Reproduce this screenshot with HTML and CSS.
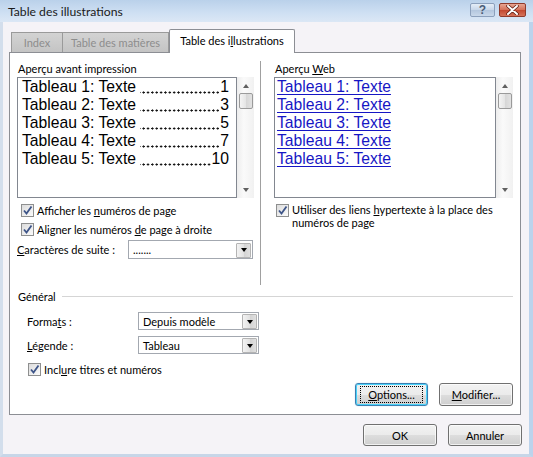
FILE: index.html
```html
<!DOCTYPE html>
<html lang="fr">
<head>
  <meta charset="UTF-8">
  <title>Table des illustrations</title>
  <link rel="stylesheet" href="styles.css">
</head>
<body>
  <div class="window">
    <div class="titlebar">
      <span class="title">Table des illustrations</span>
      <div class="caption-btns">
        <span class="cap-btn help">?</span>
        <span class="cap-btn close">
          <svg width="13" height="10" viewBox="0 0 13 10"><path d="M2 1 L11 9 M11 1 L2 9" stroke="#5a1a10" stroke-width="3.4" stroke-linecap="round"/><path d="M2 1 L11 9 M11 1 L2 9" stroke="#fff" stroke-width="2" stroke-linecap="round"/></svg>
        </span>
      </div>
    </div>

    <div class="frame">
      <div class="tabs">
        <div class="tab tab-index">Index</div>
        <div class="tab tab-toc">Table des matières</div>
        <div class="tab active"><span>Table des i<u>l</u>lustrations</span></div>
      </div>

      <div class="tabpage">
        <div class="previews">
          <!-- Print preview -->
          <div class="col col-left">
            <div class="label">Aperçu avant impression</div>
            <div class="preview-wrap">
              <div class="preview">
                <div class="entry"><span>Tableau 1: Texte&nbsp;</span><span class="dots"></span><span>1</span></div>
                <div class="entry"><span>Tableau 2: Texte&nbsp;</span><span class="dots"></span><span>3</span></div>
                <div class="entry"><span>Tableau 3: Texte&nbsp;</span><span class="dots"></span><span>5</span></div>
                <div class="entry"><span>Tableau 4: Texte&nbsp;</span><span class="dots"></span><span>7</span></div>
                <div class="entry"><span>Tableau 5: Texte&nbsp;</span><span class="dots"></span><span>10</span></div>
              </div>
              <div class="scrollbar">
                <span class="arrow up"></span>
                <span class="thumb"></span>
                <span class="arrow down"></span>
              </div>
            </div>
            <label class="check first"><span class="box"><svg width="11" height="11" viewBox="0 0 11 11"><path d="M2 5.5 L4.5 8.5 L9.5 1.5" fill="none" stroke="#3d5488" stroke-width="1.8"/></svg></span><span>Afficher les <u>n</u>uméros de page</span></label>
            <label class="check"><span class="box"><svg width="11" height="11" viewBox="0 0 11 11"><path d="M2 5.5 L4.5 8.5 L9.5 1.5" fill="none" stroke="#3d5488" stroke-width="1.8"/></svg></span><span>Aligner les numéros <u>d</u>e page à droite</span></label>
            <div class="field leader-field">
              <span class="field-label"><u>C</u>aractères de suite :</span>
              <div class="combo combo-leader"><span class="combo-text">.......</span><span class="combo-btn"></span></div>
            </div>
          </div>

          <div class="sep"></div>

          <!-- Web preview -->
          <div class="col col-right">
            <div class="label">Aperçu <u>W</u>eb</div>
            <div class="preview-wrap">
              <div class="preview web">
                <div class="entry"><a>Tableau 1: Texte</a></div>
                <div class="entry"><a>Tableau 2: Texte</a></div>
                <div class="entry"><a>Tableau 3: Texte</a></div>
                <div class="entry"><a>Tableau 4: Texte</a></div>
                <div class="entry"><a>Tableau 5: Texte</a></div>
              </div>
              <div class="scrollbar">
                <span class="arrow up"></span>
                <span class="thumb"></span>
                <span class="arrow down"></span>
              </div>
            </div>
            <label class="check first wrap"><span class="box"><svg width="11" height="11" viewBox="0 0 11 11"><path d="M2 5.5 L4.5 8.5 L9.5 1.5" fill="none" stroke="#3d5488" stroke-width="1.8"/></svg></span><span class="wrap-text">Utiliser des liens <u>h</u>ypertexte à la place des numéros de page</span></label>
          </div>
        </div>

        <!-- General group -->
        <div class="group-title"><span>Général</span><span class="group-line"></span></div>
        <div class="general">
          <div class="field">
            <span class="field-label">Forma<u>t</u>s :</span>
            <div class="combo"><span class="combo-text">Depuis modèle</span><span class="combo-btn"></span></div>
          </div>
          <div class="field">
            <span class="field-label"><u>L</u>égende :</span>
            <div class="combo"><span class="combo-text">Tableau</span><span class="combo-btn"></span></div>
          </div>
          <label class="check"><span class="box"><svg width="11" height="11" viewBox="0 0 11 11"><path d="M2 5.5 L4.5 8.5 L9.5 1.5" fill="none" stroke="#3d5488" stroke-width="1.8"/></svg></span><span>Incl<u>u</u>re titres et numéros</span></label>
        </div>

        <div class="page-actions">
          <button class="btn focused"><span class="focus-rect"><u>O</u>ptions...</span></button>
          <button class="btn"><span><u>M</u>odifier...</span></button>
        </div>
      </div>

      <div class="footer">
        <button class="btn">OK</button>
        <button class="btn">Annuler</button>
      </div>
    </div>
  </div>
</body>
</html>
```

FILE: styles.css
```css
* {
  box-sizing: border-box;
}
html, body {
  margin: 0;
  padding: 0;
}
body {
  width: 533px;
  height: 457px;
  overflow: hidden;
  font-family: Lato, "Liberation Sans", sans-serif;
  font-size: 11px;
  color: #000;
  background: #c9dbee;
}
u {
  text-decoration: underline;
  text-underline-offset: 1px;
}
.window {
  width: 533px;
  height: 457px;
  display: flex;
  flex-direction: column;
}
/* Title bar */
.titlebar {
  height: 22px;
  flex: none;
  display: flex;
  align-items: center;
  justify-content: space-between;
  padding: 0 7px 0 8px;
  background: linear-gradient(#bad1ea, #cfe0f3 60%, #dbe7f5);
}
.title {
  font-size: 12.2px;
  color: #1a1a1a;
}
.caption-btns {
  display: flex;
  gap: 4px;
  align-self: flex-start;
  margin-top: 3px;
}
.cap-btn {
  height: 14px;
  display: flex;
  align-items: center;
  justify-content: center;
  border-radius: 2px;
}
.help {
  width: 25px;
  border: 1px solid #8ca0bc;
  background: linear-gradient(#e4edf7, #c7d6e9 50%, #b3c6de 51%, #c9d8ea);
  color: #4b5e78;
  font-family: "Liberation Sans", sans-serif;
  font-weight: bold;
  font-size: 12px;
}
.close {
  width: 27px;
  border: 1px solid #8f3b2c;
  background: linear-gradient(#e7a592, #d46f57 50%, #c2472f 51%, #d6735a);
}
/* Client area */
.frame {
  flex: 1;
  display: flex;
  flex-direction: column;
  background: #f5f3f7;
  border-left: 3px solid #d3deec;
  border-right: 4px solid #bcd3ec;
  border-bottom: 3px solid #c7d6e8;
  padding: 7px 7px 0 6px;
}
.tabs {
  display: flex;
  align-items: flex-end;
  height: 24px;
  margin-bottom: -1px;
  padding-left: 2px;
  position: relative;
  z-index: 1;
}
.tab {
  height: 20px;
  margin-bottom: 1px;
  display: flex;
  align-items: center;
  justify-content: center;
  color: #8d8d8d;
  background: linear-gradient(#d3d3d3, #c4c4c4);
  border: 1px solid #9a9a9a;
  border-bottom: none;
}
.tab-index {
  width: 52px;
}
.tab-toc {
  width: 106px;
  border-left: none;
}
.tab.active {
  width: 126px;
  height: 24px;
  margin-bottom: 0;
  padding-bottom: 2px;
  color: #000;
  background: #fff;
  border: 1px solid #8c8e94;
  border-bottom: none;
  border-top-left-radius: 2px;
  border-top-right-radius: 2px;
}
.tabpage {
  width: 512px;
  height: 363px;
  background: #fff;
  border: 1px solid #8c8e94;
  padding: 8px 7px 7px 7px;
  display: flex;
  flex-direction: column;
}
/* Previews */
.previews {
  display: flex;
  height: 224px;
}
.col-left {
  width: 237px;
}
.col-right {
  width: 239px;
  margin-left: 13px;
}
.sep {
  width: 1px;
  margin-left: 6px;
  background: #a0a0a0;
}
.label {
  height: 15px;
  line-height: 15px;
  margin-bottom: 1px;
  padding-left: 1px;
}
.preview-wrap {
  display: flex;
  height: 121px;
}
.preview {
  flex: 1;
  border: 1px solid #828790;
  padding: 0 7px 0 4px;
  font-family: "Liberation Sans", Arial, sans-serif;
  font-size: 15.7px;
  line-height: 18px;
  overflow: hidden;
}
.preview.web {
  padding-left: 2px;
}
.entry {
  display: flex;
  white-space: nowrap;
}
/* leader dots, right-aligned against the page number */
.dots {
  flex: 1;
  background: radial-gradient(circle, #111 0.85px, transparent 1.35px) right 0 top 12.6px / 4.36px 3px repeat-x;
}
.web a {
  color: #1616c4;
  text-decoration: underline;
  text-underline-offset: 2px;
}
.scrollbar {
  width: 17px;
  display: flex;
  flex-direction: column;
  align-items: center;
  background: linear-gradient(90deg, #ededed, #fafafa 40%, #f1f1f1);
  padding: 0 1px;
}
.arrow {
  width: 0;
  height: 0;
  border-left: 3.5px solid transparent;
  border-right: 3.5px solid transparent;
}
.arrow.up {
  border-bottom: 4px solid #606060;
  margin-top: 7px;
}
.arrow.down {
  border-top: 4px solid #606060;
  margin-top: auto;
  margin-bottom: 6px;
}
.thumb {
  width: 14px;
  height: 16px;
  margin-top: 5px;
  margin-left: 1px;
  border: 1px solid #9a9a9a;
  border-radius: 2px;
  background: linear-gradient(90deg, #f4f4f4, #e4e4e4 50%, #d6d6d6 51%, #e2e2e2);
}
/* Checkboxes */
.check {
  display: flex;
  align-items: center;
  height: 19px;
  padding-left: 4px;
}
.check.first {
  margin-top: 3px;
}
.check.wrap {
  align-items: flex-start;
  height: auto;
  line-height: 13px;
  padding-left: 2px;
  padding-top: 3px;
}
.wrap-text {
  width: 212px;
  margin-top: -1px;
}
.box {
  width: 13px;
  height: 13px;
  margin-right: 3px;
  flex: none;
  border: 1px solid #8e8f8f;
  background: linear-gradient(135deg, #dcdcdc, #fbfbfb);
  display: flex;
  align-items: center;
  justify-content: center;
}
/* Combos */
.field {
  display: flex;
  align-items: center;
}
.leader-field {
  margin-top: 1px;
}
.field-label {
  width: 111px;
}
.combo {
  width: 121px;
  height: 18px;
  border: 1px solid #a3a8b0;
  background: #fff;
  display: flex;
  align-items: center;
  padding: 0 1px 0 4px;
}
.combo-leader {
  width: 125px;
  height: 19px;
}
.combo-text {
  flex: 1;
}
.combo-btn {
  width: 15px;
  height: 15px;
  margin-top: 1px;
  border: 1px solid #b4b4b4;
  border-radius: 1px;
  background: linear-gradient(90deg, #f3f3f3, #e2e2e2 50%, #d2d2d2 51%, #e0e0e0);
  display: flex;
  align-items: center;
  justify-content: center;
}
.combo-btn::after {
  content: "";
  border-left: 3.5px solid transparent;
  border-right: 3.5px solid transparent;
  border-top: 4px solid #000;
}
/* Général */
.group-title {
  display: flex;
  align-items: center;
  height: 15px;
  margin-top: 4px;
  padding-left: 1px;
}
.group-line {
  flex: 1;
  height: 1px;
  margin-left: 6px;
  margin-top: -1px;
  background: #d5d5d5;
}
.general {
  padding-left: 10px;
}
.general .field {
  margin-top: 8px;
}
.general .field + .field {
  margin-top: 6px;
}
.general .check {
  margin-top: 6px;
  padding-left: 1px;
}
/* Buttons */
.page-actions,
.footer {
  display: flex;
  justify-content: flex-end;
  gap: 11px;
}
.page-actions {
  margin-top: 4px;
}
.footer {
  margin-top: 9px;
}
.btn {
  width: 74px;
  height: 23px;
  font: inherit;
  color: #000;
  border: 1px solid #707070;
  border-radius: 3px;
  background: linear-gradient(#f2f2f2, #ebebeb 50%, #dddddd 51%, #cfcfcf);
  box-shadow: inset 0 0 0 1px rgba(255, 255, 255, 0.7);
  padding: 0;
  display: flex;
  align-items: center;
  justify-content: center;
}
.footer .btn {
  height: 22px;
}
.btn.focused {
  width: 73px;
  border-color: #3c7fb1;
  box-shadow: inset 0 0 0 1px #48d3fb, 0 0 1px #7ec4ea;
}
.focus-rect {
  padding: 1px 7px;
  outline: 1px dotted #000;
}
```
